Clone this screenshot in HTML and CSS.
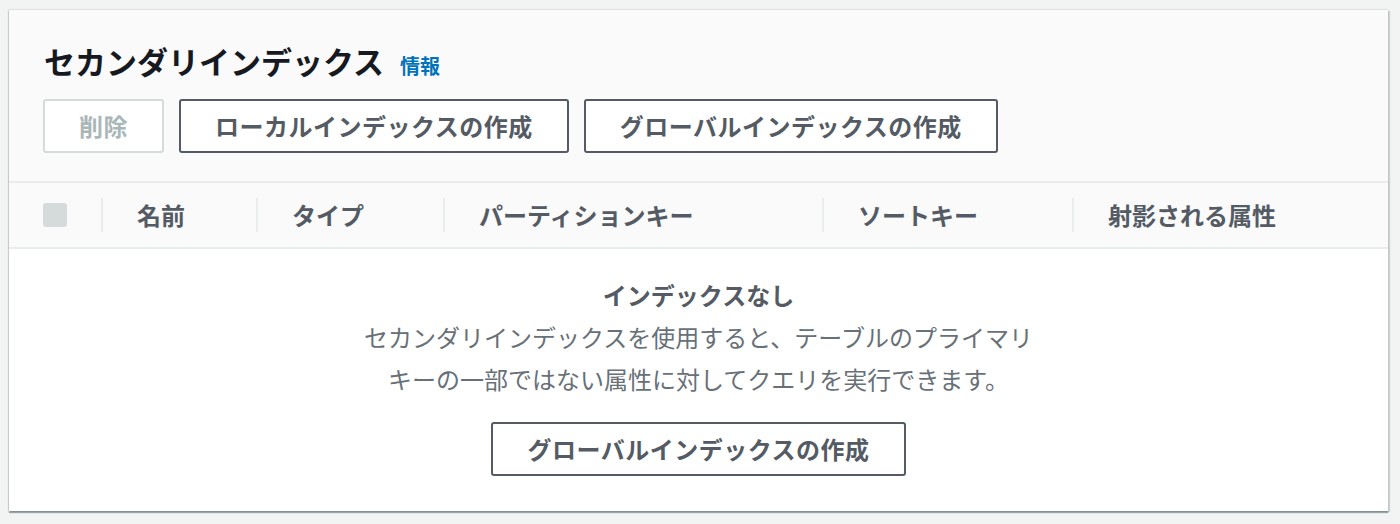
FILE: index.html
```html
<!DOCTYPE html>
<html lang="ja">
<head>
<meta charset="utf-8">
<title>セカンダリインデックス</title>
<link rel="stylesheet" href="styles.css">
</head>
<body>
<div class="card">
  <div class="card-header">
    <div class="title-row">
      <h2 class="title">セカンダリインデックス</h2>
      <a class="info" href="#">情報</a>
    </div>
    <div class="actions">
      <button class="btn btn-disabled" disabled>削除</button>
      <button class="btn">ローカルインデックスの作成</button>
      <button class="btn">グローバルインデックスの作成</button>
    </div>
  </div>
  <div class="table-head">
    <div class="cell cell-check"><span class="checkbox"></span></div>
    <div class="cell col-name">名前</div>
    <div class="cell col-type">タイプ</div>
    <div class="cell col-pk">パーティションキー</div>
    <div class="cell col-sk">ソートキー</div>
    <div class="cell col-attr">射影される属性</div>
  </div>
  <div class="empty">
    <div class="empty-title">インデックスなし</div>
    <p class="empty-text">セカンダリインデックスを使用すると、テーブルのプライマリ<br>キーの一部ではない属性に対してクエリを実行できます。</p>
    <button class="btn">グローバルインデックスの作成</button>
  </div>
</div>
</body>
</html>
```
FILE: styles.css
```css
* { box-sizing: border-box; }
html, body { margin: 0; padding: 0; }
body {
  background: #f2f3f3;
  font-family: "Noto Sans CJK JP", "Noto Sans", sans-serif;
  padding: 10px 12px 0 9px;
  height: 524px;
  overflow: hidden;
}
.card {
  background: #fff;
  height: 501px;
  box-shadow: 0 2px 1px rgba(0, 28, 36, 0.35), 2px 1px 1px rgba(0, 28, 36, 0.15), -1px 0 1px rgba(0, 28, 36, 0.12), 0 -1px 1px rgba(0, 28, 36, 0.06);
  display: flex;
  flex-direction: column;
}
.card-header {
  background: #fafafa;
  padding: 31px 34px 28px 34px;
  border-bottom: 2px solid #eaeded;
}
.title-row {
  display: flex;
  align-items: baseline;
  height: 40px;
  padding-left: 1px;
}
.title {
  margin: 0;
  font-size: 31px;
  line-height: 40px;
  font-weight: 700;
  color: #16191f;
}
.info {
  margin-left: 16px;
  font-size: 20px;
  font-weight: 700;
  color: #0073bb;
  text-decoration: none;
}
.actions {
  display: flex;
  gap: 15px;
  margin-top: 18px;
}
.btn {
  font-family: inherit;
  height: 54px;
  padding: 0 34px;
  border: 2px solid #545b64;
  border-radius: 3px;
  background: #fff;
  color: #545b64;
  font-size: 24px;
  font-weight: 700;
  letter-spacing: 0.5px;
  line-height: 1;
}
.btn-disabled {
  border-color: #d5dbdb;
  color: #aab7b8;
}
.table-head {
  display: flex;
  align-items: center;
  height: 66px;
  background: #fafafa;
  border-bottom: 2px solid #eaeded;
}
.cell {
  height: 34px;
  line-height: 34px;
  font-size: 24px;
  font-weight: 700;
  color: #545b64;
  padding-left: 34px;
  border-left: 2px solid #eaeded;
}
.cell-check {
  width: 92px;
  border-left: none;
  display: flex;
  align-items: center;
}
.checkbox {
  display: block;
  width: 24px;
  height: 24px;
  border-radius: 3px;
  background: #d5dbdb;
}
.col-name { width: 155px; }
.col-type { width: 187px; }
.col-pk { width: 379px; }
.col-sk { width: 250px; }
.col-attr { flex: 1; }
.empty {
  flex: 1;
  display: flex;
  flex-direction: column;
  align-items: center;
  padding-top: 25px;
  text-align: center;
}
.empty-title {
  font-size: 24px;
  line-height: 42px;
  font-weight: 700;
  color: #545b64;
}
.empty-text {
  margin: 0 0 22px;
  font-size: 24px;
  line-height: 42px;
  color: #687078;
}
```
